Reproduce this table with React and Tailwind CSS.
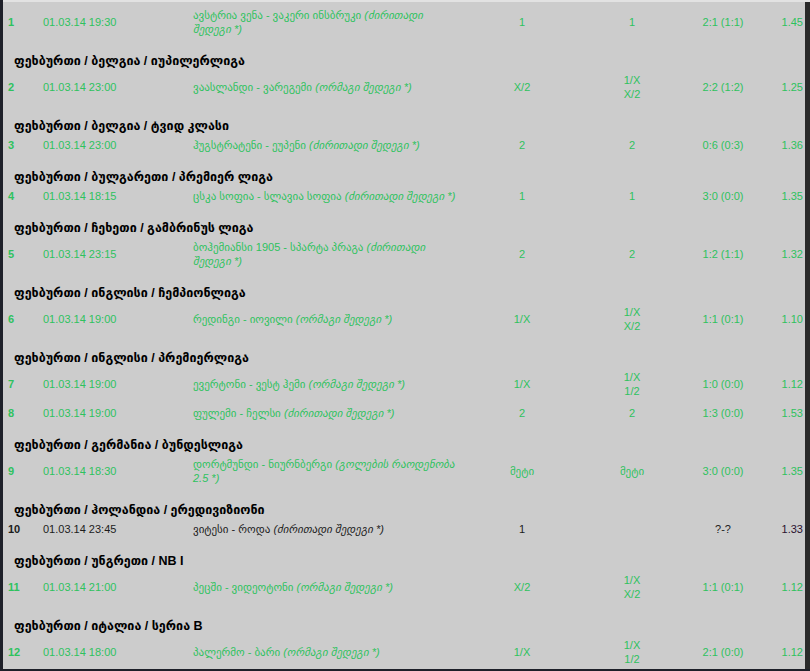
import React from "react";

const rows = [
  { type: "r", n: "1", d: "01.03.14 19:30", team: "ავსტრია ვენა - ვაკერი ინსბრუკი", p: ["(ძირითადი", "შედეგი *)"], t: ["1"], r: ["1"], s: "2:1 (1:1)", o: "1.45" },
  { type: "h", text: "ფეხბურთი / ბელგია / იუპილერლიგა" },
  { type: "r", n: "2", d: "01.03.14 23:00", team: "ვაასლანდი - ვარეგემი", p: ["(ორმაგი შედეგი *)"], t: ["X/2"], r: ["1/X", "X/2"], s: "2:2 (1:2)", o: "1.25" },
  { type: "h", text: "ფეხბურთი / ბელგია / ტვიდ კლასი" },
  { type: "r", n: "3", d: "01.03.14 23:00", team: "ჰუგსტრატენი - ეუპენი", p: ["(ძირითადი შედეგი *)"], t: ["2"], r: ["2"], s: "0:6 (0:3)", o: "1.36" },
  { type: "h", text: "ფეხბურთი / ბულგარეთი / პრემიერ ლიგა" },
  { type: "r", n: "4", d: "01.03.14 18:15", team: "ცსკა სოფია - სლავია სოფია", p: ["(ძირითადი შედეგი *)"], t: ["1"], r: ["1"], s: "3:0 (0:0)", o: "1.35" },
  { type: "h", text: "ფეხბურთი / ჩეხეთი / გამბრინუს ლიგა" },
  { type: "r", n: "5", d: "01.03.14 23:15", team: "ბოჰემიანსი 1905 - სპარტა პრაგა", p: ["(ძირითადი", "შედეგი *)"], t: ["2"], r: ["2"], s: "1:2 (1:1)", o: "1.32" },
  { type: "h", text: "ფეხბურთი / ინგლისი / ჩემპიონლიგა" },
  { type: "r", n: "6", d: "01.03.14 19:00", team: "რედინგი - იოვილი", p: ["(ორმაგი შედეგი *)"], t: ["1/X"], r: ["1/X", "X/2"], s: "1:1 (0:1)", o: "1.10" },
  { type: "h", text: "ფეხბურთი / ინგლისი / პრემიერლიგა" },
  { type: "r", n: "7", d: "01.03.14 19:00", team: "ევერტონი - ვესტ ჰემი", p: ["(ორმაგი შედეგი *)"], t: ["1/X"], r: ["1/X", "1/2"], s: "1:0 (0:0)", o: "1.12" },
  { type: "r", n: "8", d: "01.03.14 19:00", team: "ფულემი - ჩელსი", p: ["(ძირითადი შედეგი *)"], t: ["2"], r: ["2"], s: "1:3 (0:0)", o: "1.53" },
  { type: "h", text: "ფეხბურთი / გერმანია / ბუნდესლიგა" },
  { type: "r", n: "9", d: "01.03.14 18:30", team: "დორტმუნდი - ნიურნბერგი", p: ["(გოლების რაოდენობა", "2.5 *)"], t: ["მეტი"], r: ["მეტი"], s: "3:0 (0:0)", o: "1.35" },
  { type: "h", text: "ფეხბურთი / ჰოლანდია / ერედივიზიონი" },
  { type: "r", n: "10", d: "01.03.14 23:45", team: "ვიტესი - როდა", p: ["(ძირითადი შედეგი *)"], t: ["1"], r: [""], s: "?-?", o: "1.33", dark: true },
  { type: "h", text: "ფეხბურთი / უნგრეთი / NB I" },
  { type: "r", n: "11", d: "01.03.14 21:00", team: "პეცში - ვიდეოტონი", p: ["(ორმაგი შედეგი *)"], t: ["X/2"], r: ["1/X", "X/2"], s: "1:1 (0:1)", o: "1.12" },
  { type: "h", text: "ფეხბურთი / იტალია / სერია B" },
  { type: "r", n: "12", d: "01.03.14 18:00", team: "პალერმო - ბარი", p: ["(ორმაგი შედეგი *)"], t: ["1/X"], r: ["1/X", "1/2"], s: "2:1 (0:0)", o: "1.12" },
];

function Header({ text }) {
  return (
    <div className="h-[29px] pt-[13px] pl-[11px] text-[12.5px] leading-[16px] font-bold text-black whitespace-nowrap">
      {text}
    </div>
  );
}

function Row({ row }) {
  const color = row.dark ? "text-[#1c1c1c]" : "text-[#2ec25e]";
  return (
    <div className={`flex items-center py-[4px] text-[11px] leading-[14px] ${color}`}>
      <div className="w-[40px] pl-[5px] font-bold">{row.n}</div>
      <div className="w-[150px]">{row.d}</div>
      <div className="w-[278px] whitespace-nowrap">
        <span>{row.team} </span>
        <i>{row.p[0]}</i>
        {row.p[1] && (
          <>
            <br />
            <i>{row.p[1]}</i>
          </>
        )}
      </div>
      <div className="w-[102px] text-center">
        {row.t.map((x, i) => (
          <div key={i}>{x}</div>
        ))}
      </div>
      <div className="w-[118px] text-center">
        {row.r.map((x, i) => (
          <div key={i}>{x}</div>
        ))}
      </div>
      <div className="w-[64px] text-center whitespace-nowrap">{row.s}</div>
      <div className={`w-[48px] text-right ${row.dark ? "text-[#2a1230]" : ""}`}>{row.o}</div>
    </div>
  );
}

export default function App() {
  return (
    <div className="w-[810px] h-[671px] bg-[#1e2029] flex flex-col overflow-hidden font-['Liberation_Sans','DejaVu_Sans',sans-serif]">
      <div className="h-[2px] ml-[3px] bg-[#e2e2e2] shrink-0" />
      <div className="flex h-[667px] shrink-0">
        <div className="ml-[3px] w-[802px] h-full bg-[#cccccc] pt-[2px] pr-[2px] overflow-hidden">
          {rows.map((row, i) =>
            row.type === "h" ? <Header key={i} text={row.text} /> : <Row key={i} row={row} />
          )}
        </div>
        <div className="flex-1 bg-[#2a2a2a]" />
      </div>
    </div>
  );
}
